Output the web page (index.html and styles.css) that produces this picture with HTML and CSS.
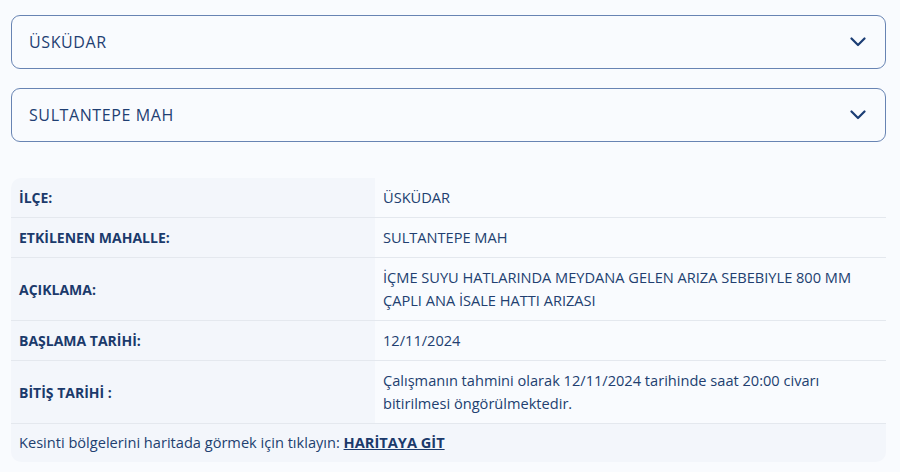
FILE: index.html
```html
<!DOCTYPE html>
<html lang="tr">
<head>
  <meta charset="UTF-8">
  <meta name="viewport" content="width=device-width, initial-scale=1.0">
  <title>Arıza ve Kesinti Bilgisi</title>
  <link rel="stylesheet" href="styles.css">
</head>
<body>
  <div class="page">
    <div class="select-box">
      <span>ÜSKÜDAR</span>
      <svg class="chevron" width="16" height="10" viewBox="0 0 16 10"><path d="M1.5 1.5 L8 8 L14.5 1.5" fill="none" stroke="#1b3d74" stroke-width="2.2" stroke-linecap="round" stroke-linejoin="round"/></svg>
    </div>
    <div class="select-box">
      <span>SULTANTEPE MAH</span>
      <svg class="chevron" width="16" height="10" viewBox="0 0 16 10"><path d="M1.5 1.5 L8 8 L14.5 1.5" fill="none" stroke="#1b3d74" stroke-width="2.2" stroke-linecap="round" stroke-linejoin="round"/></svg>
    </div>

    <table class="info-table">
      <tr>
        <th>İLÇE:</th>
        <td>ÜSKÜDAR</td>
      </tr>
      <tr>
        <th>ETKİLENEN MAHALLE:</th>
        <td>SULTANTEPE MAH</td>
      </tr>
      <tr>
        <th>AÇIKLAMA:</th>
        <td>İÇME SUYU HATLARINDA MEYDANA GELEN ARIZA SEBEBIYLE 800 MM ÇAPLI ANA İSALE HATTI ARIZASI</td>
      </tr>
      <tr>
        <th>BAŞLAMA TARİHİ:</th>
        <td>12/11/2024</td>
      </tr>
      <tr>
        <th>BİTİŞ TARİHİ :</th>
        <td>Çalışmanın tahmini olarak 12/11/2024 tarihinde saat 20:00 civarı bitirilmesi öngörülmektedir.</td>
      </tr>
      <tr class="footer-row">
        <td colspan="2">Kesinti bölgelerini haritada görmek için tıklayın: <a href="#">HARİTAYA GİT</a></td>
      </tr>
    </table>
  </div>
</body>
</html>
```

FILE: styles.css
```css
body {
  margin: 0;
  background: #f9fbfe;
  font-family: "Open Sans", "Noto Sans", sans-serif;
  color: #1d3b6f;
}
.page {
  padding: 15px 14px 0 11px;
}
.select-box {
  display: flex;
  align-items: center;
  justify-content: space-between;
  height: 52px;
  padding: 0 19px 0 17px;
  margin-bottom: 19px;
  border: 1px solid #6884b3;
  border-radius: 9px;
  font-size: 16px;
  letter-spacing: 0.6px;
  color: #1f3f73;
}
.chevron {
  display: block;
}
.info-table {
  width: 100%;
  margin-top: 36px;
  border-collapse: separate;
  border-spacing: 0;
  background: #f3f6fb;
  border-radius: 10px;
  font-size: 14px;
  line-height: 23px;
}
.info-table th,
.info-table td {
  padding: 8px 8px 8px;
  border-bottom: 1px solid #e4e8ee;
  text-align: left;
  vertical-align: middle;
}
.info-table th {
  width: 348px;
  font-weight: 700;
  color: #1b3a6b;
}
.info-table td {
  background: #f9fbfe;
  color: #223f70;
  font-size: 14.6px;
}
.info-table .footer-row td {
  background: transparent;
  border-bottom: none;
  padding: 8px 8px 9px;
  line-height: 21px;
}
.info-table a {
  color: #1b3a6b;
  font-weight: 700;
  text-decoration: underline;
}
```
